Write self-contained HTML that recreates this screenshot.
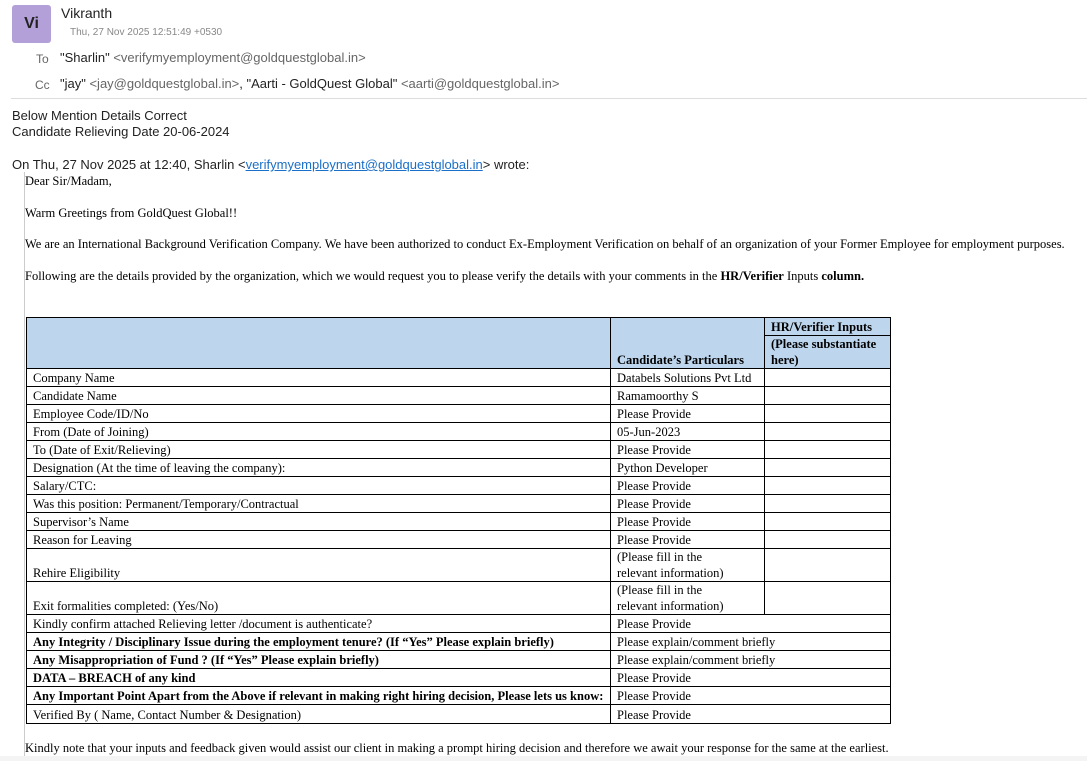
<!DOCTYPE html>
<html><head><meta charset="utf-8"><style>
body{margin:0;width:1087px;height:761px;overflow:hidden;background:#fff;font-family:"Liberation Sans",sans-serif;position:relative}
.a{position:absolute;white-space:nowrap}
.av{left:12px;top:5px;width:39px;height:38px;background:#b3a0d9;border-radius:3px;color:#222;font-size:16px;font-weight:bold;text-align:center;line-height:38px}
.hd{font-size:13px;color:#222}
.g{color:#666}
.s{font-family:"Liberation Serif",serif;font-size:12.5px;color:#000;letter-spacing:0}
table{position:absolute;left:26px;top:317px;border-collapse:collapse;font-family:"Liberation Serif",serif;font-size:12.5px}
td{border:1px solid #000;padding:0 0 0 6px;vertical-align:bottom;line-height:16px;white-space:nowrap}
tr{height:18px}
.bl{background:#bdd6ee}
b{font-weight:bold}
</style></head><body>
<div class="a av">Vi</div>
<div class="a hd" style="left:61px;top:5px;font-size:14px">Vikranth</div>
<div class="a g" style="left:70px;top:27px;font-size:10px;color:#888">Thu, 27 Nov 2025 12:51:49 +0530</div>
<div class="a hd" style="left:36px;top:51px"><span class="g" style="font-size:12px">To</span></div>
<div class="a hd" style="left:60px;top:50px">"Sharlin" <span class="g">&lt;verifymyemployment@goldquestglobal.in&gt;</span></div>
<div class="a hd" style="left:35px;top:77px"><span class="g" style="font-size:12px">Cc</span></div>
<div class="a hd" style="left:60px;top:76px">"jay" <span class="g">&lt;jay@goldquestglobal.in&gt;</span>, "Aarti - GoldQuest Global" <span class="g">&lt;aarti@goldquestglobal.in&gt;</span></div>
<div class="a" style="left:11px;top:98px;width:1076px;height:1px;background:#ddd"></div>
<div class="a hd" style="left:12px;top:108px;font-size:13px;line-height:16px">Below Mention Details Correct<br>Candidate Relieving Date 20-06-2024</div>
<div class="a hd" style="left:12px;top:157px;font-size:13px">On Thu, 27 Nov 2025 at 12:40, Sharlin &lt;<span style="color:#1a6fc9;text-decoration:underline">verifymyemployment@goldquestglobal.in</span>&gt; wrote:</div>
<div class="a" style="left:24px;top:172px;width:1px;height:589px;background:#ccc"></div>
<div class="a s" style="left:25px;top:174px">Dear Sir/Madam,</div>
<div class="a s" style="left:25px;top:206px">Warm Greetings from GoldQuest Global!!</div>
<div class="a s" style="left:25px;top:237px">We are an International Background Verification Company. We have been authorized to conduct Ex-Employment Verification on behalf of an organization of your Former Employee for employment purposes.</div>
<div class="a s" style="left:25px;top:269px">Following are the details provided by the organization, which we would request you to please verify the details with your comments in the <b>HR/Verifier</b> Inputs <b>column.</b></div>
<table>
<colgroup><col style="width:584px"><col style="width:154px"><col style="width:126px"></colgroup>
<tr style="height:18px"><td class="bl" rowspan="2"></td><td class="bl" rowspan="2"><b>Candidate’s Particulars</b></td><td class="bl"><b>HR/Verifier Inputs</b></td></tr>
<tr style="height:33px"><td class="bl" style="white-space:normal"><b>(Please substantiate here)</b></td></tr>
<tr><td>Company Name</td><td>Databels Solutions Pvt Ltd</td><td></td></tr>
<tr><td>Candidate Name</td><td>Ramamoorthy S</td><td></td></tr>
<tr><td>Employee Code/ID/No</td><td>Please Provide</td><td></td></tr>
<tr><td>From (Date of Joining)</td><td>05-Jun-2023</td><td></td></tr>
<tr><td>To (Date of Exit/Relieving)</td><td>Please Provide</td><td></td></tr>
<tr><td>Designation (At the time of leaving the company):</td><td>Python Developer</td><td></td></tr>
<tr><td>Salary/CTC:</td><td>Please Provide</td><td></td></tr>
<tr><td>Was this position: Permanent/Temporary/Contractual</td><td>Please Provide</td><td></td></tr>
<tr><td>Supervisor’s Name</td><td>Please Provide</td><td></td></tr>
<tr><td>Reason for Leaving</td><td>Please Provide</td><td></td></tr>
<tr style="height:33px"><td>Rehire Eligibility</td><td>(Please fill in the<br>relevant information)</td><td></td></tr>
<tr style="height:33px"><td>Exit formalities completed: (Yes/No)</td><td>(Please fill in the<br>relevant information)</td><td></td></tr>
<tr><td>Kindly confirm attached Relieving letter /document is authenticate?</td><td colspan="2">Please Provide</td></tr>
<tr><td><b>Any Integrity / Disciplinary Issue during the employment tenure? (If “Yes” Please explain briefly)</b></td><td colspan="2">Please explain/comment briefly</td></tr>
<tr><td><b>Any Misappropriation of Fund ? (If “Yes” Please explain briefly)</b></td><td colspan="2">Please explain/comment briefly</td></tr>
<tr><td><b>DATA – BREACH of any kind</b></td><td colspan="2">Please Provide</td></tr>
<tr><td><b>Any Important Point Apart from the Above if relevant in making right hiring decision, Please lets us know:</b></td><td colspan="2">Please Provide</td></tr>
<tr style="height:19px"><td>Verified By ( Name, Contact Number &amp; Designation)</td><td colspan="2">Please Provide</td></tr>
</table>
<div class="a s" style="left:25px;top:741px">Kindly note that your inputs and feedback given would assist our client in making a prompt hiring decision and therefore we await your response for the same at the earliest.</div>
<div class="a" style="left:0;top:756px;width:1087px;height:5px;background:#f4f4f4"></div>
</body></html>
